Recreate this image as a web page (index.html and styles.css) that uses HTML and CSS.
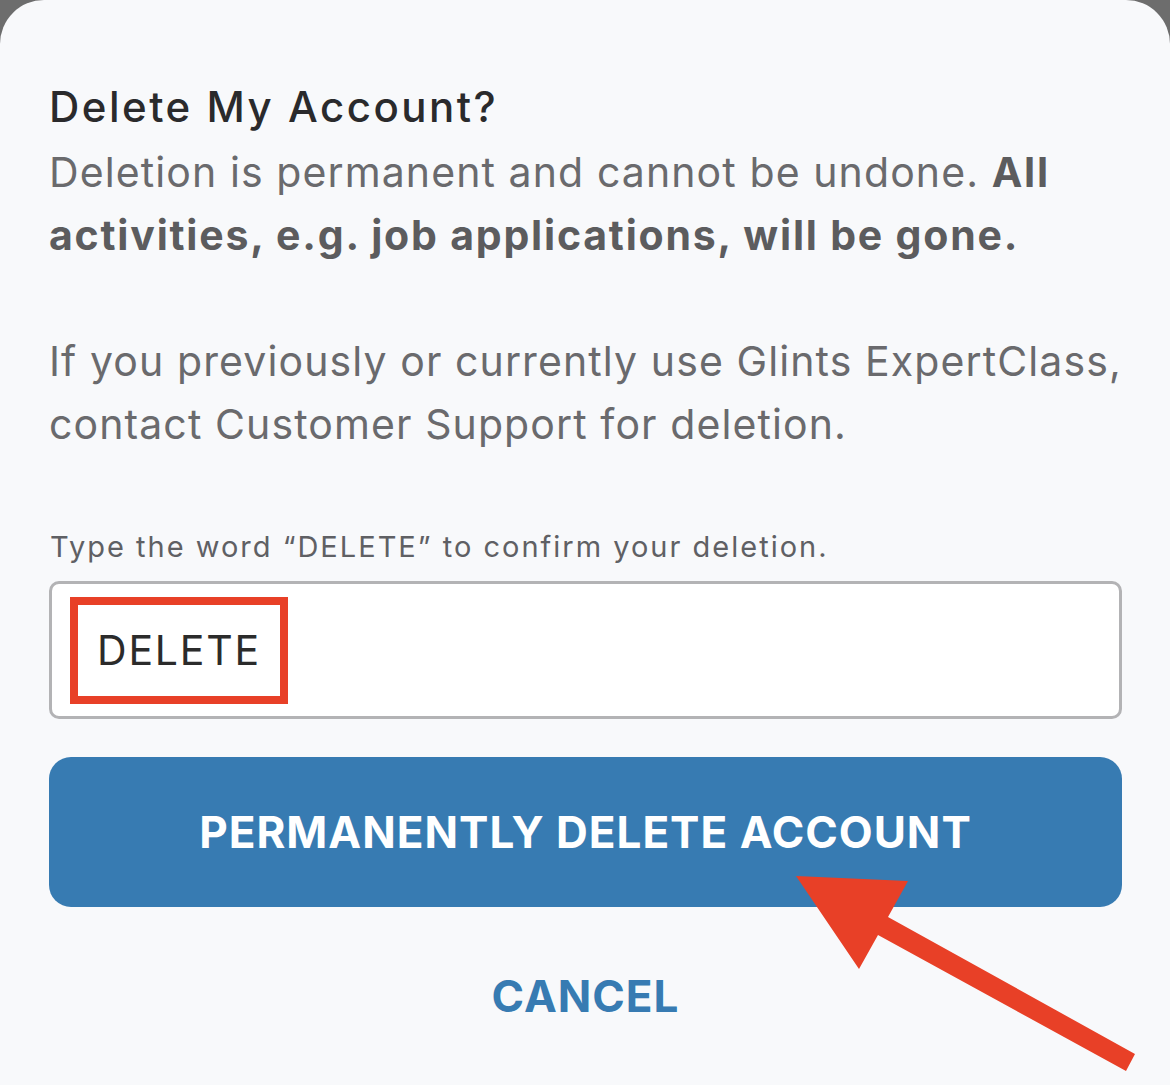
FILE: index.html
```html
<!DOCTYPE html>
<html lang="en">
<head>
    <meta charset="UTF-8">
    <meta name="viewport" content="width=device-width, initial-scale=1.0">
    <title>Delete My Account</title>
    <link rel="stylesheet" href="styles.css">
</head>
<body>

<div class="sheet">

    <!-- Heading and warning text -->
    <h1 class="title">Delete My Account?</h1>
    <p class="text">Deletion is permanent and cannot be undone. <b>All activities, e.g. job applications, will be gone.</b></p>
    <p class="text">If you previously or currently use Glints ExpertClass, contact Customer Support for deletion.</p>

    <!-- Confirm field -->
    <label class="confirm-label" for="confirm">Type the word &ldquo;DELETE&rdquo; to confirm your deletion.</label>
    <div class="field" id="confirm">
        <span class="typed">DELETE</span>
    </div>

    <button class="delete-button">PERMANENTLY DELETE ACCOUNT</button>
    <button class="cancel-button">CANCEL</button>

</div>

<!-- Annotation arrow -->
<svg class="arrow" width="1170" height="1085" viewBox="0 0 1170 1085">
    <polygon points="796,876 908,881 888,917 1135,1054 1126,1071 878,935 859,969" fill="#e84027"/>
</svg>

</body>
</html>
```

FILE: styles.css
```css
body {
    font-family: Inter, "Noto Sans", sans-serif;
    background-color: #6d6d6d;
    margin: 0;
    padding: 0;
    overflow: hidden;
}
.sheet {
    background-color: #f8f9fb;
    border-radius: 44px 44px 0 0;
    min-height: 1085px;
    box-sizing: border-box;
    padding: 83px 48px 0 49px;
}
.title {
    font-size: 42px;
    font-weight: 500;
    line-height: 48px;
    letter-spacing: 2.5px;
    color: #2a2a2c;
    margin: 0 0 10px;
}
.text {
    font-size: 41px;
    line-height: 63px;
    letter-spacing: 1.1px;
    color: #6a6a6d;
    margin: 0 0 63px;
}
.text b {
    font-weight: 700;
    letter-spacing: 1.8px;
    color: #5c5c5e;
}
.confirm-label {
    display: block;
    font-size: 29px;
    line-height: 36px;
    letter-spacing: 2px;
    color: #5f6064;
    margin-top: 73px;
    margin-left: 1px;
}
.field {
    display: flex;
    align-items: center;
    height: 138px;
    box-sizing: border-box;
    margin-top: 16px;
    padding-left: 18px;
    background-color: white;
    border: 3px solid #b3b3b5;
    border-radius: 10px;
}
.typed {
    font-size: 41px;
    line-height: 91px;
    letter-spacing: 1.8px;
    color: #2b2b2b;
    padding: 0 19px 0 19px;
    border: 8px solid #e84027;
}
.delete-button {
    display: block;
    width: 100%;
    height: 150px;
    margin-top: 38px;
    background-color: #377bb2;
    color: white;
    font-family: Inter, "Noto Sans", sans-serif;
    font-size: 44px;
    font-weight: 700;
    letter-spacing: 1px;
    border: none;
    border-radius: 22px;
}
.cancel-button {
    display: block;
    margin: 63px auto 0;
    background: none;
    border: none;
    color: #377bb2;
    font-family: Inter, "Noto Sans", sans-serif;
    font-size: 44px;
    font-weight: 700;
    line-height: 50px;
    letter-spacing: 1px;
}
.arrow {
    position: absolute;
    left: 0;
    top: 0;
    pointer-events: none;
}
```
